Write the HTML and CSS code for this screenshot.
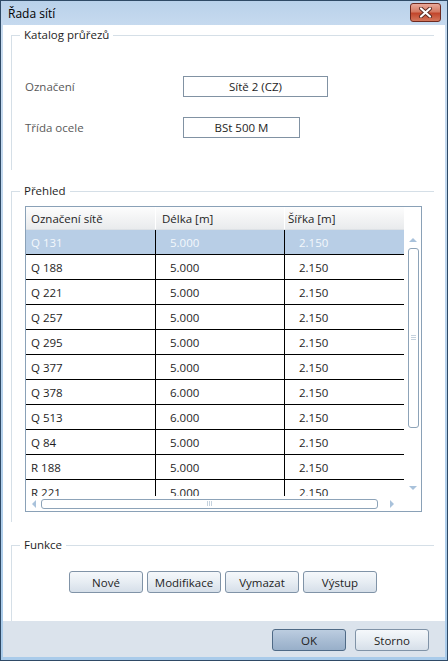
FILE: index.html
```html
<!DOCTYPE html>
<html lang="cs">
<head>
    <meta charset="UTF-8">
    <title>Řada sítí</title>
    <link rel="stylesheet" href="styles.css">
</head>
<body>
    <div class="window">
        <div class="titlebar">
            <span class="title">Řada sítí</span>
            <button class="close" title="Zavřít">
                <svg width="15" height="11" viewBox="0 0 15 11">
                    <path d="M3 1.5 L12 9.5 M12 1.5 L3 9.5" stroke="#5a2a22" stroke-width="4" stroke-linecap="round"/>
                    <path d="M3 1.5 L12 9.5 M12 1.5 L3 9.5" stroke="#ffffff" stroke-width="2.2" stroke-linecap="round"/>
                </svg>
            </button>
        </div>

        <div class="client">
            <fieldset class="group group-catalog">
                <legend>Katalog průřezů</legend>
                <div class="field-row">
                    <span class="field-label">Označení</span>
                    <span class="field-box box-wide">Sítě 2 (CZ)</span>
                </div>
                <div class="field-row">
                    <span class="field-label">Třída ocele</span>
                    <span class="field-box box-narrow">BSt 500 M</span>
                </div>
            </fieldset>

            <fieldset class="group group-overview">
                <legend>Přehled</legend>
                <div class="table">
                    <div class="table-main">
                        <div class="grid-area">
                            <div class="grid-head">
                                <div class="hcell c1">Označení sítě</div>
                                <div class="hcell c2">Délka [m]</div>
                                <div class="hcell c3">Šířka [m]</div>
                            </div>
                            <div class="grid-body" id="rows"></div>
                        </div>
                        <div class="vscroll">
                            <span class="arrow arrow-up"></span>
                            <span class="vthumb"><span class="vgrip"></span></span>
                            <span class="spacer"></span>
                            <span class="arrow arrow-down"></span>
                        </div>
                    </div>
                    <div class="hscroll">
                        <span class="arrow arrow-left"></span>
                        <span class="hthumb"><span class="hgrip"></span></span>
                        <span class="arrow arrow-right"></span>
                    </div>
                </div>
            </fieldset>

            <fieldset class="group group-functions">
                <legend>Funkce</legend>
                <div class="func-buttons">
                    <button class="btn">Nové</button>
                    <button class="btn">Modifikace</button>
                    <button class="btn">Vymazat</button>
                    <button class="btn">Výstup</button>
                </div>
            </fieldset>

            <div class="footer">
                <button class="btn btn-default">OK</button>
                <button class="btn">Storno</button>
            </div>
        </div>
    </div>

    <script>
        const nets = [
            ["Q 131", "5.000", "2.150"],
            ["Q 188", "5.000", "2.150"],
            ["Q 221", "5.000", "2.150"],
            ["Q 257", "5.000", "2.150"],
            ["Q 295", "5.000", "2.150"],
            ["Q 377", "5.000", "2.150"],
            ["Q 378", "6.000", "2.150"],
            ["Q 513", "6.000", "2.150"],
            ["Q 84", "5.000", "2.150"],
            ["R 188", "5.000", "2.150"],
            ["R 221", "5.000", "2.150"]
        ];

        const body = document.getElementById("rows");
        nets.forEach((net, i) => {
            const row = document.createElement("div");
            row.className = i === 0 ? "row selected" : "row";
            row.innerHTML = `
                <div class="cell c1">${net[0]}</div>
                <div class="cell c2">${net[1]}</div>
                <div class="cell c3">${net[2]}</div>
            `;
            body.appendChild(row);
        });
    </script>
</body>
</html>
```

FILE: styles.css
```css
* {
    box-sizing: border-box;
}
body {
    margin: 0;
    font-family: "Segoe UI", "Open Sans", sans-serif;
    font-size: 11.5px;
    color: #1e1e1e;
}
button {
    font-family: inherit;
    font-size: 11.5px;
}
.window {
    width: 448px;
    height: 661px;
    border: 1px solid #2f4a66;
    background: linear-gradient(#b9d1ea, #c9dcf0 30px, #a9cbea);
    padding: 0 2px 3px 2px;
    display: flex;
    flex-direction: column;
}
.titlebar {
    height: 24px;
    display: flex;
    align-items: center;
    justify-content: space-between;
    padding: 0 4px 0 5px;
}
.title {
    color: #000;
    font-size: 12px;
}
.close {
    width: 31px;
    height: 19px;
    margin-top: -2px;
    border: 1px solid #6e2a20;
    border-radius: 3px;
    background: linear-gradient(#e9a99a, #d47a63 45%, #c2462c 55%, #d4775c);
    display: flex;
    align-items: center;
    justify-content: center;
    padding: 0;
}
.client {
    flex: 1;
    background: #fff;
    display: flex;
    flex-direction: column;
}
.group {
    margin: 0 11px 0 8px;
    padding: 0 0 0 13px;
    border-style: solid;
    border-color: #d5dfe7;
    border-width: 1px 0 0 1px;
    min-width: 0;
}
.group legend {
    padding: 0 4px;
    margin-left: -5px;
    line-height: 16px;
    color: #1e1e1e;
}
.group-catalog {
    margin-top: 2px;
    padding-top: 33px;
    padding-bottom: 32px;
}
.field-row {
    display: flex;
    align-items: center;
    height: 21px;
}
.field-row + .field-row {
    margin-top: 20px;
}
.field-label {
    width: 158px;
    color: #595959;
}
.field-box {
    height: 21px;
    border: 1px solid #8192a3;
    text-align: center;
    line-height: 19px;
}
.box-wide {
    width: 145px;
}
.box-narrow {
    width: 117px;
}
.group-overview {
    margin-top: 13px;
    padding-top: 7px;
    padding-bottom: 10px;
}
.table {
    width: 397px;
    border: 1px solid #8aa1b7;
}
.table-main {
    display: flex;
    height: 289px;
}
.grid-area {
    width: 378px;
    display: flex;
    flex-direction: column;
}
.grid-head {
    height: 23px;
    display: grid;
    grid-template-columns: 130px 129px 119px;
    background: linear-gradient(#fdfdfd, #f1f2f3 60%, #e9ebed);
    border-bottom: 1px solid #dde1e5;
}
.hcell {
    display: flex;
    align-items: center;
    padding-left: 5px;
}
.hcell.c1, .hcell.c2 {
    border-right: 1px solid #fff;
}
.hcell.c2 {
    padding-left: 6px;
}
.hcell.c3 {
    padding-left: 3px;
}
.grid-body {
    height: 266px;
    overflow: hidden;
}
.row {
    height: 25px;
    display: grid;
    grid-template-columns: 130px 129px 119px;
    border-bottom: 1px solid #000;
}
.cell {
    display: flex;
    align-items: center;
    padding-left: 14px;
}
.cell.c1 {
    padding-left: 5px;
    border-right: 1px solid #000;
}
.cell.c2 {
    border-right: 1px solid #000;
}
.row.selected {
    background: #b8cee6;
    color: #f4f8fc;
}
.vscroll {
    width: 17px;
    display: flex;
    flex-direction: column;
    align-items: center;
    padding: 31px 0 6px 1px;
}
.spacer {
    flex: 1;
}
.arrow {
    width: 0;
    height: 0;
    border: 4px solid transparent;
}
.arrow-up {
    border-top: 0;
    border-bottom: 4px solid #a9c2db;
}
.arrow-down {
    border-bottom: 0;
    border-top: 4px solid #a9c2db;
}
.arrow-left {
    border-left: 0;
    border-right: 4px solid #a9c2db;
}
.arrow-right {
    border-right: 0;
    border-left: 4px solid #a9c2db;
}
.vthumb {
    width: 11px;
    height: 180px;
    margin-top: 6px;
    border: 1px solid #8da3b8;
    border-radius: 3px;
    background: #fff;
    display: flex;
    align-items: center;
    justify-content: center;
}
.vgrip {
    width: 5px;
    height: 6px;
    background: repeating-linear-gradient(#c5d2de 0 1px, transparent 1px 2px);
}
.hscroll {
    height: 15px;
    display: flex;
    align-items: center;
    padding: 0 22px 0 6px;
}
.hthumb {
    width: 337px;
    height: 10px;
    margin: 0 12px 0 5px;
    border: 1px solid #8da3b8;
    border-radius: 3px;
    background: #fff;
    display: flex;
    align-items: center;
    justify-content: center;
}
.hgrip {
    width: 6px;
    height: 5px;
    background: repeating-linear-gradient(90deg, #c5d2de 0 1px, transparent 1px 2px);
}
.group-functions {
    margin-top: 15px;
    padding-top: 18px;
    padding-bottom: 28px;
    flex: 1;
}
.func-buttons {
    display: flex;
    justify-content: center;
    gap: 4px;
    margin-left: -13px;
}
.btn {
    width: 74px;
    height: 22px;
    padding: 0;
    border: 1px solid #8093a7;
    border-radius: 3px;
    background: linear-gradient(#f5f8fb, #e7edf3 50%, #d6dfe9);
    color: #1e1e1e;
    cursor: pointer;
}
.btn:hover {
    background: linear-gradient(#eaf4fc, #c7e2f6);
}
.footer {
    height: 36px;
    background: #dbe3ec;
    display: flex;
    justify-content: flex-end;
    gap: 9px;
    padding: 8px 16px 0 0;
}
.btn-default {
    border-color: #4f6a86;
    background: linear-gradient(#bccde0, #a9bdd4 50%, #98afc9);
}
```
